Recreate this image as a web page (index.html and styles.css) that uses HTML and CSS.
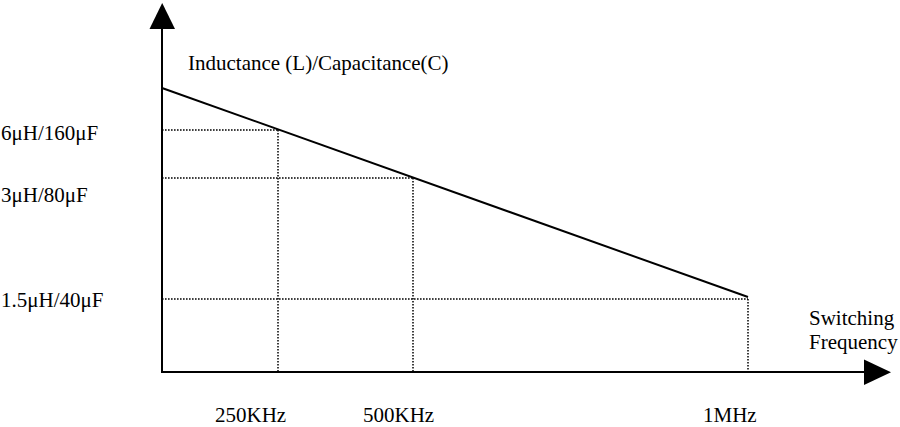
FILE: index.html
```html
<!DOCTYPE html>
<html>
<head>
<meta charset="utf-8">
<link rel="stylesheet" href="styles.css">
</head>
<body>
<div class="chart">
<svg class="canvas" width="900" height="427" viewBox="0 0 900 427" xmlns="http://www.w3.org/2000/svg">
  <g class="grid">
    <line x1="162" y1="130" x2="278" y2="130"/>
    <line x1="162" y1="178" x2="413" y2="178"/>
    <line x1="162" y1="299" x2="748" y2="299"/>
    <line x1="278" y1="130" x2="278" y2="372"/>
    <line x1="413" y1="178" x2="413" y2="372"/>
    <line x1="748" y1="299" x2="748" y2="372"/>
  </g>
  <g class="axis">
    <line x1="162" y1="26" x2="162" y2="373"/>
    <line x1="161" y1="372" x2="866" y2="372"/>
    <line x1="162" y1="88" x2="748" y2="297"/>
  </g>
  <polygon class="head" points="149.5,29 175,29 162.2,3"/>
  <polygon class="head" points="864,359.5 864,385 891,372.3"/>
  <g class="label">
    <text x="188" y="70">Inductance (L)/Capacitance(C)</text>
    <text x="1" y="140">6μH/160μF</text>
    <text x="1" y="202">3μH/80μF</text>
    <text x="1" y="307">1.5μH/40μF</text>
    <text x="215" y="422">250KHz</text>
    <text x="363" y="422">500KHz</text>
    <text x="703" y="422">1MHz</text>
    <text x="809" y="325">Switching</text>
    <text x="809" y="349">Frequency</text>
  </g>
</svg>
</div>
</body>
</html>
```

FILE: styles.css
```css
html, body {
  margin: 0;
  padding: 0;
  background: #ffffff;
}
.chart {
  width: 900px;
  height: 427px;
  overflow: hidden;
}
.canvas {
  display: block;
}
.grid line {
  stroke: #000000;
  stroke-width: 1.5;
  stroke-dasharray: 1.6 1.4;
}
.axis line {
  stroke: #000000;
  stroke-width: 2;
}
.head {
  fill: #000000;
}
.label text {
  font-family: "Liberation Serif", "Times New Roman", serif;
  font-size: 21px;
  fill: #000000;
}
```
